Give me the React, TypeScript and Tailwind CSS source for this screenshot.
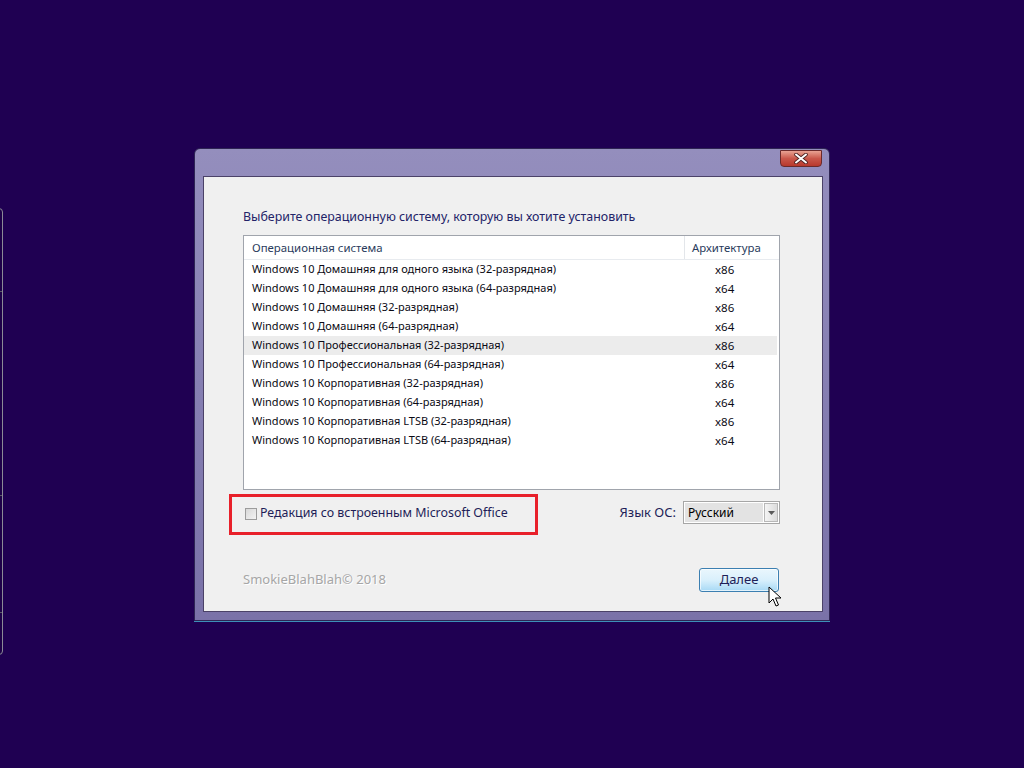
import React from "react";

const editions = [
  ["Windows 10 Домашняя для одного языка (32-разрядная)", "x86"],
  ["Windows 10 Домашняя для одного языка (64-разрядная)", "x64"],
  ["Windows 10 Домашняя (32-разрядная)", "x86"],
  ["Windows 10 Домашняя (64-разрядная)", "x64"],
  ["Windows 10 Профессиональная (32-разрядная)", "x86"],
  ["Windows 10 Профессиональная (64-разрядная)", "x64"],
  ["Windows 10 Корпоративная (32-разрядная)", "x86"],
  ["Windows 10 Корпоративная (64-разрядная)", "x64"],
  ["Windows 10 Корпоративная LTSB (32-разрядная)", "x86"],
  ["Windows 10 Корпоративная LTSB (64-разрядная)", "x64"],
];

function CloseButton() {
  return (
    <div className="absolute right-[7px] top-[1px] flex h-[17px] w-[42px] items-center justify-center rounded-b-[4px] border border-[#6b2a2a] bg-gradient-to-b from-[#e8a293] via-[#c9574a] to-[#b8382c]">
      <svg width="14" height="11" viewBox="0 0 14 11">
        <path d="M2 1.5 L12 9.5 M12 1.5 L2 9.5" stroke="#4a2020" strokeWidth="3.6" strokeLinecap="round" />
        <path d="M2 1.5 L12 9.5 M12 1.5 L2 9.5" stroke="#ffffff" strokeWidth="2" strokeLinecap="round" />
      </svg>
    </div>
  );
}

function Cursor() {
  return (
    <svg className="absolute left-[768px] top-[586px]" width="16" height="22" viewBox="0 0 16 22">
      <path d="M1 1 L1 17 L5 13 L8 20 L10.5 19 L7.5 12 L13 12 Z" fill="#ffffff" stroke="#000000" strokeWidth="1" strokeLinejoin="miter" />
    </svg>
  );
}

export default function App() {
  return (
    <div className="relative h-[768px] w-[1024px] overflow-hidden bg-[#1f0052] font-['Noto_Sans','Liberation_Sans',sans-serif]">
      {/* window mostly off screen on the left */}
      <div className="absolute left-[-100px] top-[208px] h-[447px] w-[103px] rounded-r-[4px] border border-[#8a8a96] bg-[#1d0048]">
        <div className="mt-[82px] border-t border-[#5c5868]" />
        <div className="mt-[203px] border-t border-[#5c5868]" />
        <div className="mt-[116px] border-t border-[#5c5868]" />
      </div>

      <div className="ml-[194px] mt-[148px] w-[636px]">
        <div className="relative rounded-t-[6px] border border-[#2e2454] bg-gradient-to-b from-[#948ebd] via-[#867fb2] to-[#7a72a8] pb-[8px] pl-[8px] pr-[6px] pt-[27px] shadow-[0_1px_0_#3d8fb8]">
          <CloseButton />
          <div className="h-[436px] border border-[#4b4268] bg-[#f0f0f0] pl-[39px] pr-[42px] pt-[32px]">
            <div className="h-[16px] text-[12.4px] leading-[16px] text-[#232368]">
              Выберите операционную систему, которую вы хотите установить
            </div>

            <div className="mt-[10px] h-[255px] border border-[#a0a4ac] bg-white">
              <div className="flex h-[24px] border-b border-[#e8ebef] text-[11.4px] text-[#2a3b5c]">
                <div className="flex w-[441px] items-center border-r border-[#e3e6ea] pl-[8px]">Операционная система</div>
                <div className="flex items-center pl-[7px]">Архитектура</div>
              </div>
              <div className="pr-[2px]">
                {editions.map(([name, arch], i) => (
                  <div
                    key={name}
                    className={`flex h-[19px] items-center text-[11px] text-[#0a0a14] ${i === 4 ? "bg-[#ececec]" : ""}`}
                  >
                    <div className="w-[441px] pl-[8px]">{name}</div>
                    <div className="pl-[30px] text-[11.5px]">{arch}</div>
                  </div>
                ))}
              </div>
            </div>

            <div className="mt-[4px] flex items-center justify-between">
              <div className="-ml-[14px] flex h-[41px] w-[309px] items-center border-[3px] border-[#e8202a] pb-[2px] pl-[13px]">
                <div className="h-[12px] w-[12px] border border-[#9c9c9c] bg-gradient-to-br from-[#d8d8d8] to-[#f4f4f4]" />
                <span className="ml-[3px] text-[12.4px] text-[#1e1e58]">Редакция со встроенным Microsoft Office</span>
              </div>
              <div className="mb-[4px] flex items-center">
                <span className="text-[13px] text-[#1e1e58]">Язык ОС:</span>
                <div className="ml-[7px] flex h-[23px] w-[97px] border border-[#a6a6a6] bg-white p-[1px]">
                  <div className="flex flex-1 items-center bg-[#e3e3e3] pl-[3px] text-[12px] text-[#000]">Русский</div>
                  <div className="ml-[1px] flex w-[14px] items-center justify-center border border-[#b8b8b8] bg-gradient-to-r from-[#f4f4f4] to-[#dcdcdc]">
                    <svg width="7" height="4" viewBox="0 0 7 4">
                      <path d="M0 0 L7 0 L3.5 4 Z" fill="#5a5a5a" />
                    </svg>
                  </div>
                </div>
              </div>
            </div>

            <div className="mt-[33px] flex items-center justify-between pr-[1px]">
              <span className="text-[13px] text-[#a6a6a6] [text-shadow:1px_1px_0_#ffffff]">
                SmokieBlahBlah© 2018
              </span>
              <button className="flex h-[24px] w-[80px] items-center justify-center rounded-[3px] border border-[#3c7fb1] bg-gradient-to-b from-[#eaf6fd] via-[#d9f0fc] to-[#a7d9f5] text-[13px] text-[#1e1e58] shadow-[inset_0_0_0_1px_#ffffffaa]">
                Далее
              </button>
            </div>
          </div>
        </div>
      </div>

      <Cursor />
    </div>
  );
}
